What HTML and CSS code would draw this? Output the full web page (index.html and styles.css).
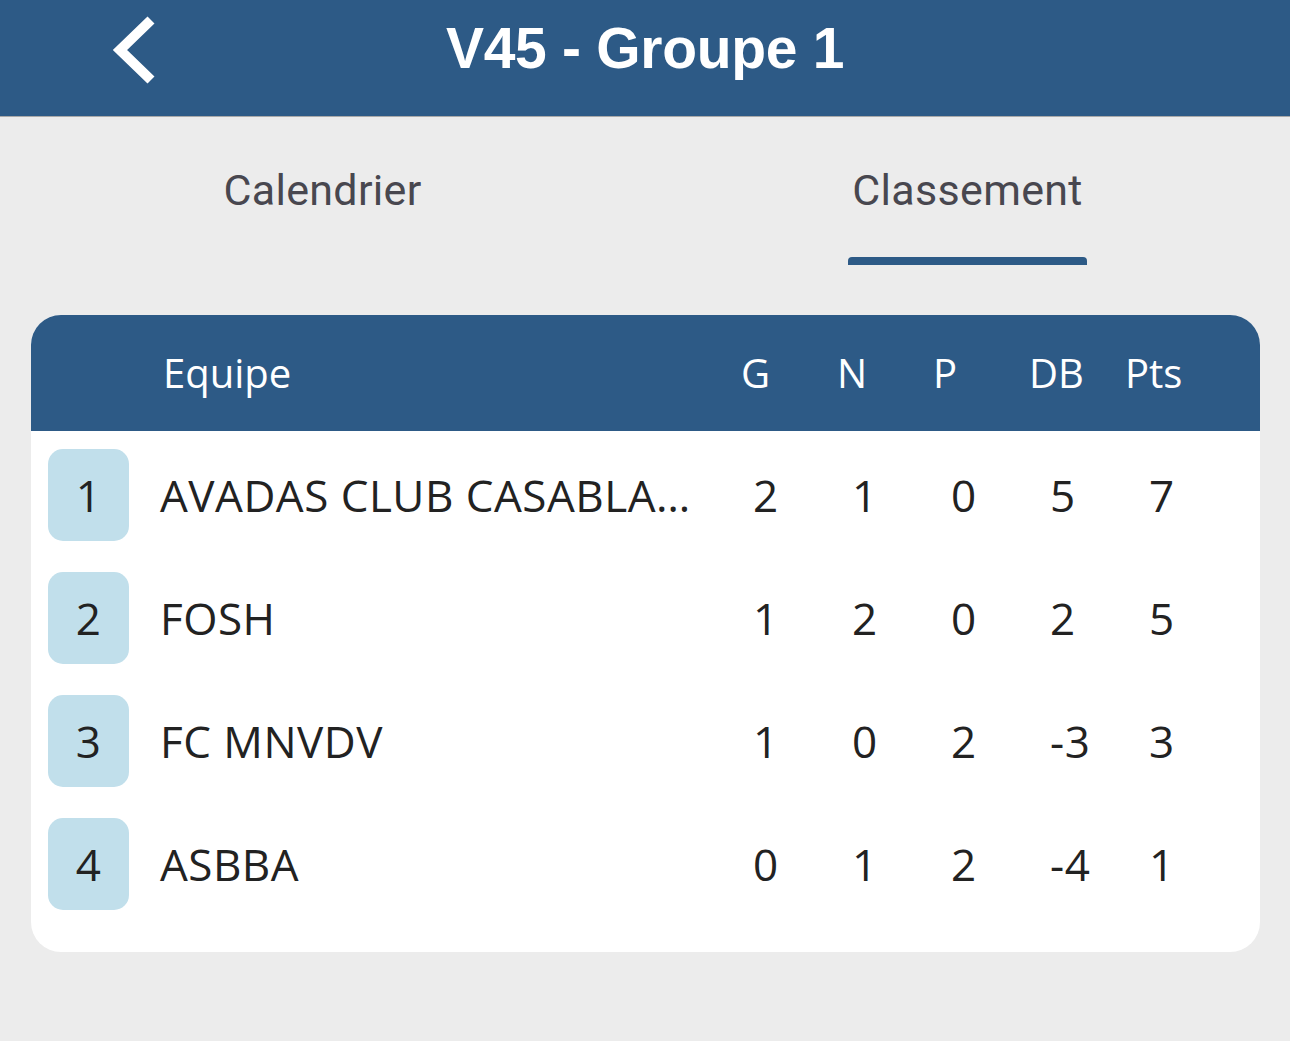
FILE: index.html
```html
<!DOCTYPE html>
<html lang="fr">
<head>
  <meta charset="UTF-8" />
  <meta name="viewport" content="width=device-width, initial-scale=1.0" />
  <title>V45 - Groupe 1</title>
  <link rel="stylesheet" href="styles.css">
</head>
<body>
  <header class="topbar">
    <a class="back" href="#" aria-label="Retour">
      <svg width="50" height="72" viewBox="0 0 50 72">
        <polyline points="41,6 10,36 41,66" fill="none" stroke="#fff" stroke-width="10" stroke-linejoin="miter" />
      </svg>
    </a>
    <h1>V45 - Groupe 1</h1>
  </header>

  <nav class="tabs">
    <div class="tab">Calendrier</div>
    <div class="tab active">Classement</div>
  </nav>

  <section class="card">
    <div class="card-head">
      <span></span>
      <span class="col-team">Equipe</span>
      <span>G</span>
      <span>N</span>
      <span>P</span>
      <span>DB</span>
      <span>Pts</span>
    </div>

    <div class="rows">
      <div class="row">
        <span class="rank">1</span>
        <span class="team">AVADAS CLUB CASABLANCA</span>
        <span>2</span><span>1</span><span>0</span><span>5</span><span>7</span>
      </div>
      <div class="row">
        <span class="rank">2</span>
        <span class="team">FOSH</span>
        <span>1</span><span>2</span><span>0</span><span>2</span><span>5</span>
      </div>
      <div class="row">
        <span class="rank">3</span>
        <span class="team">FC MNVDV</span>
        <span>1</span><span>0</span><span>2</span><span>-3</span><span>3</span>
      </div>
      <div class="row">
        <span class="rank">4</span>
        <span class="team">ASBBA</span>
        <span>0</span><span>1</span><span>2</span><span>-4</span><span>1</span>
      </div>
    </div>
  </section>
</body>
</html>
```

FILE: styles.css
```css
body {
  margin: 0;
  background: #ececec;
  font-family: "Open Sans", sans-serif;
}

/* top bar */
.topbar {
  position: relative;
  height: 116px;
  background: #2d5a86;
  border-bottom: 1px solid #a9a9a9;
  display: flex;
  align-items: center;
  justify-content: center;
}
.topbar h1 {
  margin: 0;
  color: #fff;
  font-family: "Liberation Sans", Arial, sans-serif;
  font-weight: bold;
  font-size: 57px;
  letter-spacing: -0.3px;
  padding-bottom: 20px;
}
.back {
  position: absolute;
  left: 110px;
  top: 14px;
  display: block;
}
.back svg {
  display: block;
}

/* tabs */
.tabs {
  display: flex;
  height: 148px;
}
.tab {
  flex: 1;
  display: flex;
  flex-direction: column;
  align-items: center;
  padding-top: 48px;
  font-family: Roboto, sans-serif;
  font-size: 43px;
  letter-spacing: 0.3px;
  color: #48474f;
  box-sizing: border-box;
}
.tab.active::after {
  content: "";
  display: block;
  width: 239px;
  height: 8px;
  margin-top: auto;
  background: #2d5a86;
  border-radius: 4px 4px 0 0;
}

/* ranking card */
.card {
  margin: 50px 30px 0 31px;
  background: #fff;
  border-radius: 30px;
  overflow: hidden;
}
.card-head {
  height: 116px;
  background: #2d5a86;
  color: #fff;
  font-size: 40px;
  display: grid;
  grid-template-columns: 81px 612px repeat(5, 96px) 1fr;
  align-items: center;
  padding-left: 17px;
  padding-bottom: 2px;
  box-sizing: border-box;
}
.col-team {
  padding-left: 34px;
}

.rows {
  display: flex;
  flex-direction: column;
  gap: 31px;
  padding: 18px 0 42px 17px;
}
.row {
  display: grid;
  grid-template-columns: 81px 624px repeat(5, 99px) 1fr;
  align-items: center;
  font-size: 44px;
  letter-spacing: 0.5px;
  color: #222;
}
.rank {
  height: 92px;
  background: #c1dfeb;
  border-radius: 15px;
  display: flex;
  align-items: center;
  justify-content: center;
}
.team {
  padding: 0 55px 0 31px;
  white-space: nowrap;
  overflow: hidden;
  text-overflow: ellipsis;
}
```
